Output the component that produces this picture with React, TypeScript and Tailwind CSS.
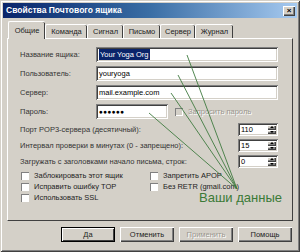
import type { ReactNode } from 'react';

const FONT = "font-['Liberation_Sans',Arial,sans-serif]";

const sunken =
  'bg-white shadow-[inset_1px_1px_#808080,inset_-1px_-1px_#fff,inset_2px_2px_#404040,inset_-2px_-2px_#d4d0c8]';
const raised =
  'bg-[#d4d0c8] shadow-[inset_1px_1px_#fff,inset_-1px_-1px_#404040,inset_-2px_-2px_#808080]';

function TextBox({ children, className = '' }: { children: ReactNode; className?: string }) {
  return (
    <div className={`flex h-[15px] items-center pl-[3px] text-[7.5px] text-black ${sunken} ${className}`}>
      {children}
    </div>
  );
}

function Spinner({ value }: { value: string }) {
  return (
    <div className={`ml-auto flex h-[13px] w-[40px] items-stretch p-[2px] ${sunken}`}>
      <span className="flex-1 pl-[1px] text-[7.5px] leading-[9px] text-black">{value}</span>
      <div className="flex w-[9px] flex-col">
        <div className={`flex flex-1 items-center justify-center ${raised}`}>
          <span className="h-0 w-0 border-x-[2px] border-b-[2px] border-x-transparent border-b-black" />
        </div>
        <div className={`flex flex-1 items-center justify-center ${raised}`}>
          <span className="h-0 w-0 border-x-[2px] border-t-[2px] border-x-transparent border-t-black" />
        </div>
      </div>
    </div>
  );
}

function Check({ label, disabled = false }: { label: string; disabled?: boolean }) {
  return (
    <div className="flex h-[11px] items-center gap-[5px]">
      <span
        className={`h-[8px] w-[8px] ${
          disabled
            ? 'bg-[#d4d0c8] shadow-[inset_1px_1px_#808080,inset_-1px_-1px_#fff]'
            : 'bg-white shadow-[inset_1px_1px_#808080,inset_-1px_-1px_#fff]'
        }`}
      />
      <span
        className={`text-[7.5px] ${
          disabled ? 'text-[#9a978f] [text-shadow:1px_1px_#fff]' : 'text-[#222]'
        }`}
      >
        {label}
      </span>
    </div>
  );
}

function Row({ label, children }: { label: string; children: ReactNode }) {
  return (
    <div className="flex items-center">
      <span className="w-[76px] shrink-0 text-[7.5px] text-[#333]">{label}</span>
      {children}
    </div>
  );
}

const tabs = [
  { label: 'Общие', w: 'w-[37px]' },
  { label: 'Команда', w: 'w-[42px]' },
  { label: 'Сигнал', w: 'w-[36px]' },
  { label: 'Письмо', w: 'w-[37px]' },
  { label: 'Сервер', w: 'w-[35px]' },
  { label: 'Журнал', w: 'w-[38px]' },
];

const buttons = ['Да', 'Отменить', 'Применить', 'Помощь'];

export default function App() {
  return (
    <div
      className={`relative h-[252px] w-[300px] overflow-hidden bg-[#d4d0c8] p-[3px] ${FONT} shadow-[inset_1px_1px_#d4d0c8,inset_-1px_-1px_#404040,inset_2px_2px_#fff,inset_-2px_-2px_#808080]`}
    >
      {/* title bar */}
      <div className="flex h-[15px] items-center justify-between bg-gradient-to-r from-[#0a246a] via-[#3a6ea5] to-[#a6caf0] pl-[3px] pr-[2px]">
        <span className="text-[8.5px] font-bold text-white">Свойства Почтового ящика</span>
        <span className={`flex h-[10px] w-[12px] items-center justify-center text-[8px] font-bold leading-none text-black ${raised}`}>
          ×
        </span>
      </div>

      {/* tabs */}
      <div className="mt-[3px] flex h-[17px] items-end pl-[5px]">
        {tabs.map((t, i) =>
          i === 0 ? (
            <div
              key={t.label}
              className={`relative z-10 -mb-px flex h-[18px] ${t.w} items-center justify-center rounded-t-[2px] border-l border-t border-l-white border-t-white bg-[#d4d0c8] shadow-[inset_-1px_0_#404040] text-[7.5px] text-[#222]`}
            >
              {t.label}
            </div>
          ) : (
            <div
              key={t.label}
              className={`flex h-[14px] ${t.w} items-center justify-center rounded-t-[2px] border-l border-t border-l-white border-t-white shadow-[inset_-1px_0_#404040] text-[7.5px] text-[#222]`}
            >
              {t.label}
            </div>
          ),
        )}
      </div>

      {/* panel */}
      <div className="relative mx-[4px] h-[183px] border border-b-[#404040] border-l-white border-r-[#404040] border-t-white pl-[12px] pr-[14px] pt-[8px]">
        <div className="flex flex-col gap-[4px]">
          <Row label="Название ящика:">
            <TextBox className="flex-1">
              <span className="bg-[#0a246a] px-[1px] text-white">Your Yoga Org</span>
            </TextBox>
          </Row>
          <Row label="Пользователь:">
            <TextBox className="flex-1">youryoga</TextBox>
          </Row>
          <Row label="Сервер:">
            <TextBox className="flex-1">mail.example.com</TextBox>
          </Row>
          <Row label="Пароль:">
            <TextBox className="w-[72px]">
              <span className="text-[6.5px] font-bold tracking-[0.3px]">●●●●●●</span>
            </TextBox>
            <div className="ml-[7px]">
              <Check label="Запросить пароль" disabled />
            </div>
          </Row>
        </div>

        <div className="mt-[4px] flex flex-col gap-[3px]">
          <div className="flex items-center">
            <span className="text-[7.5px] text-[#333]">Порт POP3-сервера (десятичный):</span>
            <Spinner value="110" />
          </div>
          <div className="flex items-center">
            <span className="text-[7.5px] text-[#333]">Интервал проверки в минутах (0 - запрещено):</span>
            <Spinner value="15" />
          </div>
          <div className="flex items-center">
            <span className="text-[7.5px] text-[#333]">Загружать с заголовками начало письма, строк:</span>
            <Spinner value="0" />
          </div>
        </div>

        <div className="mt-[2px] grid grid-cols-[129px_1fr] pl-[1px]">
          <div className="flex flex-col">
            <Check label="Заблокировать этот ящик" />
            <Check label="Исправить ошибку TOP" />
            <Check label="Использовать SSL" />
          </div>
          <div className="flex flex-col">
            <Check label="Запретить APOP" />
            <Check label="Без RETR (gmail.com)" />
          </div>
        </div>

        <span className="absolute left-[191px] top-[151px] text-[13px] leading-[15px] text-[#3b7a37]">
          Ваши данные
        </span>
      </div>

      {/* buttons */}
      <div className="mt-[6px] flex justify-end gap-[5px] pr-[5px]">
        {buttons.map((b, i) => (
          <div
            key={b}
            className={`flex h-[15px] w-[54px] items-center justify-center text-[7.5px] ${
              i === 0
                ? 'bg-[#d4d0c8] shadow-[inset_0_0_0_1px_#000,inset_2px_2px_#fff,inset_-2px_-2px_#404040]'
                : raised
            } ${i === 2 ? 'text-[#9a978f] [text-shadow:1px_1px_#fff]' : 'text-[#222]'}`}
          >
            {b}
          </div>
        ))}
      </div>

      {/* annotation lines */}
      <svg className="pointer-events-none absolute left-0 top-0" width="300" height="252">
        {[
          [187, 55],
          [178, 75],
          [171, 93],
          [149, 113],
        ].map(([x, y]) => (
          <line key={`${x}-${y}`} x1={x} y1={y} x2={237} y2={189} stroke="#3f7a3f" strokeWidth="0.9" />
        ))}
      </svg>
    </div>
  );
}
